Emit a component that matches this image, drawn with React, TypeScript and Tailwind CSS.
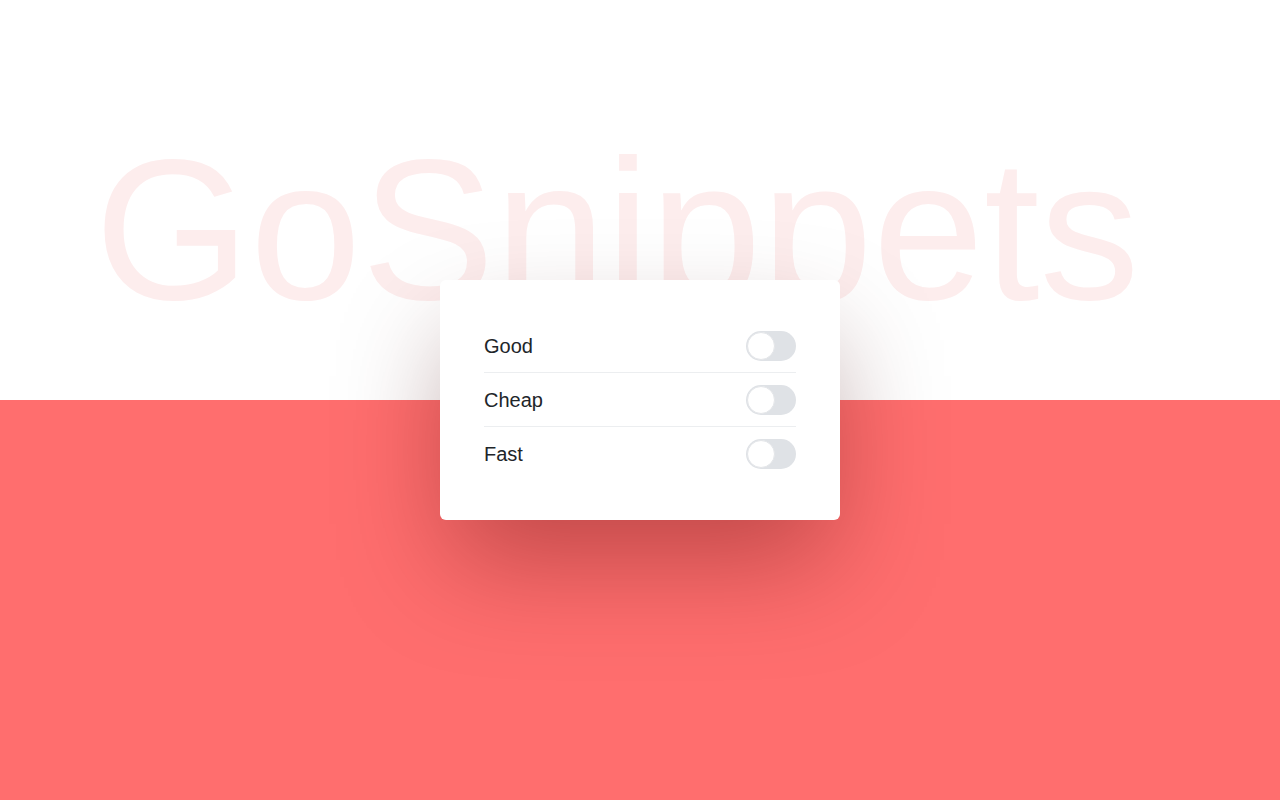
import { useState } from "react";

const options = ["Good", "Cheap", "Fast"];

function Toggle({ on, onChange }: { on: boolean; onChange: () => void }) {
  return (
    <button
      type="button"
      role="switch"
      aria-checked={on}
      onClick={onChange}
      className={`relative flex h-[30px] w-[50px] shrink-0 items-center rounded-full p-px transition-colors ${
        on ? "bg-[#ff6e6e]" : "bg-[#dfe2e6]"
      }`}
    >
      <span
        className={`h-[28px] w-[28px] rounded-full border border-[#e4e6e9] bg-white transition-transform ${
          on ? "translate-x-[20px]" : "translate-x-0"
        }`}
      />
    </button>
  );
}

export default function App() {
  const [checked, setChecked] = useState([false, false, false]);

  return (
    <div className="relative min-h-[800px] w-full overflow-hidden font-['Liberation_Sans',Arial,sans-serif]">
      {/* top half with the faded wordmark */}
      <div className="flex h-[400px] items-start justify-center bg-white pr-[46px] pt-[130px]">
        <h1 className="select-none text-[200px] leading-none text-[#fdeded]">GoSnippets</h1>
      </div>
      <div className="h-[400px] bg-[#ff6e6e]" />

      {/* settings card sits across the split */}
      <div className="absolute left-1/2 top-1/2 w-[400px] -translate-x-1/2 -translate-y-1/2 rounded-md bg-white px-[44px] py-[39px] shadow-[0_50px_110px_-10px_rgba(70,0,0,0.35)]">
        {options.map((label, i) => (
          <div
            key={label}
            className={`flex h-[54px] items-center justify-between ${
              i < options.length - 1 ? "border-b border-[#eceef0]" : ""
            }`}
          >
            <span className="text-[20px] text-[#212529]">{label}</span>
            <Toggle
              on={checked[i]}
              onChange={() =>
                setChecked((prev) => prev.map((v, j) => (j === i ? !v : v)))
              }
            />
          </div>
        ))}
      </div>
    </div>
  );
}
